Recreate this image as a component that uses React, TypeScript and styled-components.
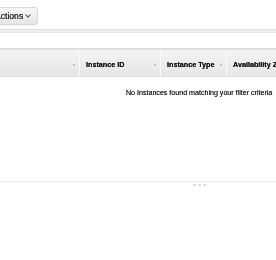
import styled, { createGlobalStyle } from "styled-components";

const GlobalStyle = createGlobalStyle`
  html, body {
    margin: 0;
    padding: 0;
    background: #ffffff;
    font-family: "Liberation Sans", Arial, sans-serif;
    overflow: hidden;
  }
`;

const columns = [
  { label: "", width: 79 },
  { label: "Instance ID", width: 81 },
  { label: "Instance Type", width: 66 },
  { label: "Availability Zone", width: 120 },
];

const App = () => {
  return (
    <Wrapper>
      <GlobalStyle />
      <Toolbar>
        <ActionsButton>
          Actions <Chevron />
        </ActionsButton>
      </Toolbar>
      <Divider />
      <TableHead>
        {columns.map((column, index) => (
          <HeadCell key={index} $width={column.width} $first={index === 0}>
            <span>{column.label}</span>
            {index < columns.length - 1 && <SortArrow />}
          </HeadCell>
        ))}
      </TableHead>
      <EmptyRow>No Instances found matching your filter criteria</EmptyRow>
      <Footer>
        <Grip>
          <i />
          <i />
          <i />
        </Grip>
      </Footer>
    </Wrapper>
  );
};

const Wrapper = styled.div`
  width: 276px;
  height: 260px;
  overflow: hidden;
  will-change: transform;
  -webkit-font-smoothing: antialiased;
`;

const Toolbar = styled.div`
  height: 29px;
  display: flex;
  align-items: flex-start;
  padding-top: 7px;
  box-sizing: border-box;
`;

const ActionsButton = styled.button`
  margin-left: -14px;
  height: 18px;
  padding: 0 7px 0 8px;
  display: flex;
  align-items: center;
  gap: 2px;
  font-family: "Liberation Sans", Arial, sans-serif;
  font-size: 8.6px;
  color: #222;
  text-shadow: 0 0 0.4px #444;
  background: linear-gradient(#f7f7f7, #e6e6e6);
  border: 1px solid #d8d8d8;
  border-radius: 3px;
  box-shadow: 0 1px 0 rgba(0, 0, 0, 0.04);
`;

const Chevron = styled.span`
  display: inline-block;
  width: 3px;
  height: 3px;
  margin-top: -3px;
  margin-left: 1px;
  border-right: 1px solid #555;
  border-bottom: 1px solid #555;
  transform: rotate(45deg);
`;

const Divider = styled.div`
  height: 2px;
  background: #efefef;
  border-top: 1px solid #dcdcdc;
  border-bottom: 1px solid #e6e6e6;
  margin-bottom: 15px;
`;

const TableHead = styled.div`
  display: flex;
  height: 26px;
  border-top: 2px solid #dedede;
  background: linear-gradient(#f4f4f4, #e6e6e6);
  border-bottom: 1px solid #e0e0e0;
`;

const HeadCell = styled.div<{ $width: number; $first: boolean }>`
  flex: 0 0 ${(p) => p.$width}px;
  display: flex;
  align-items: center;
  justify-content: space-between;
  box-sizing: border-box;
  padding: 3px 4px 0 6px;
  border-left: ${(p) => (p.$first ? "none" : "1px solid #fafafa")};
  font-size: 7.2px;
  font-weight: bold;
  color: #111;
  text-shadow: 0 0 0.4px #333;
  white-space: nowrap;
`;

const SortArrow = styled.i`
  width: 0;
  height: 0;
  border-left: 1.5px solid transparent;
  border-right: 1.5px solid transparent;
  border-top: 2px solid #a8a8a8;
`;

const EmptyRow = styled.div`
  padding: 12px 0 0 126px;
  height: 92px;
  font-size: 7.1px;
  color: #222;
  text-shadow: 0 0 0.4px #444;
  white-space: nowrap;
`;

const Footer = styled.div`
  border-top: 1px solid #e6e6e6;
  display: flex;
  padding: 2px 0 0 193px;
`;

const Grip = styled.div`
  display: flex;
  gap: 2px;
  i {
    width: 3px;
    height: 2px;
    background: #dcdcdc;
  }
`;

export default App;
